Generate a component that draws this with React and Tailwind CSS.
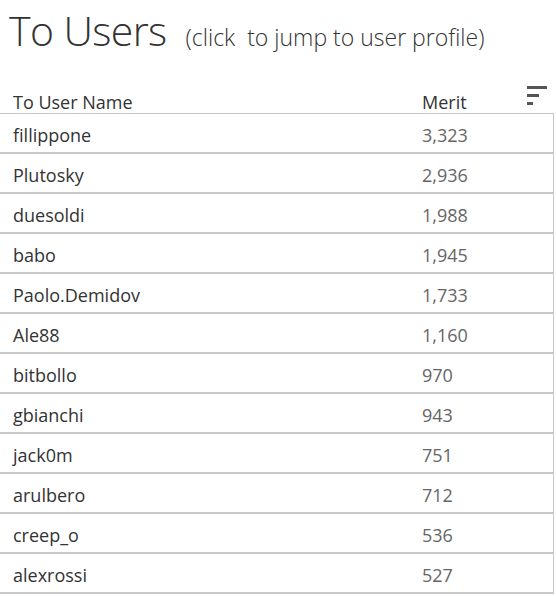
import React from "react";

const users = [
  { name: "fillippone", merit: "3,323" },
  { name: "Plutosky", merit: "2,936" },
  { name: "duesoldi", merit: "1,988" },
  { name: "babo", merit: "1,945" },
  { name: "Paolo.Demidov", merit: "1,733" },
  { name: "Ale88", merit: "1,160" },
  { name: "bitbollo", merit: "970" },
  { name: "gbianchi", merit: "943" },
  { name: "jack0m", merit: "751" },
  { name: "arulbero", merit: "712" },
  { name: "creep_o", merit: "536" },
  { name: "alexrossi", merit: "527" },
];

const App = () => {
  return (
    <div className="w-[556px] h-[596px] bg-white overflow-hidden font-['Open_Sans',sans-serif] text-[#333]">
      {/* Title */}
      <div className="flex items-baseline h-[71px] pl-[9px] pt-[4px]">
        <h1 className="text-[41px] leading-[52px] font-light tracking-[-0.6px] text-[#333]">To Users</h1>
        <span className="ml-[19px] text-[23px] font-light text-[#333]">(click&nbsp; to jump to user profile)</span>
      </div>

      {/* Table */}
      <div className="w-[554px]">
        <div className="relative flex items-end h-[43px] border-b border-[#c8c8c8] text-[18px] leading-[22px]">
          <span className="pl-[13px] w-[422px]">To User Name</span>
          <span>Merit</span>
          <div className="absolute right-[7px] top-[15px] flex flex-col gap-[5px]">
            <div className="w-[20px] h-[3px] bg-[#555]" />
            <div className="w-[12px] h-[3px] bg-[#555]" />
            <div className="w-[6px] h-[3px] bg-[#555]" />
          </div>
        </div>

        <div className="border-r border-[#c8c8c8]">
          {users.map((u, i) => (
            <div
              key={i}
              className="flex items-center h-[40px] pt-[5px] border-b-2 border-[#c8c8c8] text-[18px]"
            >
              <span className="pl-[13px] w-[422px] text-[#333]">{u.name}</span>
              <span className="text-[#666]">{u.merit}</span>
            </div>
          ))}
        </div>
      </div>
    </div>
  );
};

export default App;
